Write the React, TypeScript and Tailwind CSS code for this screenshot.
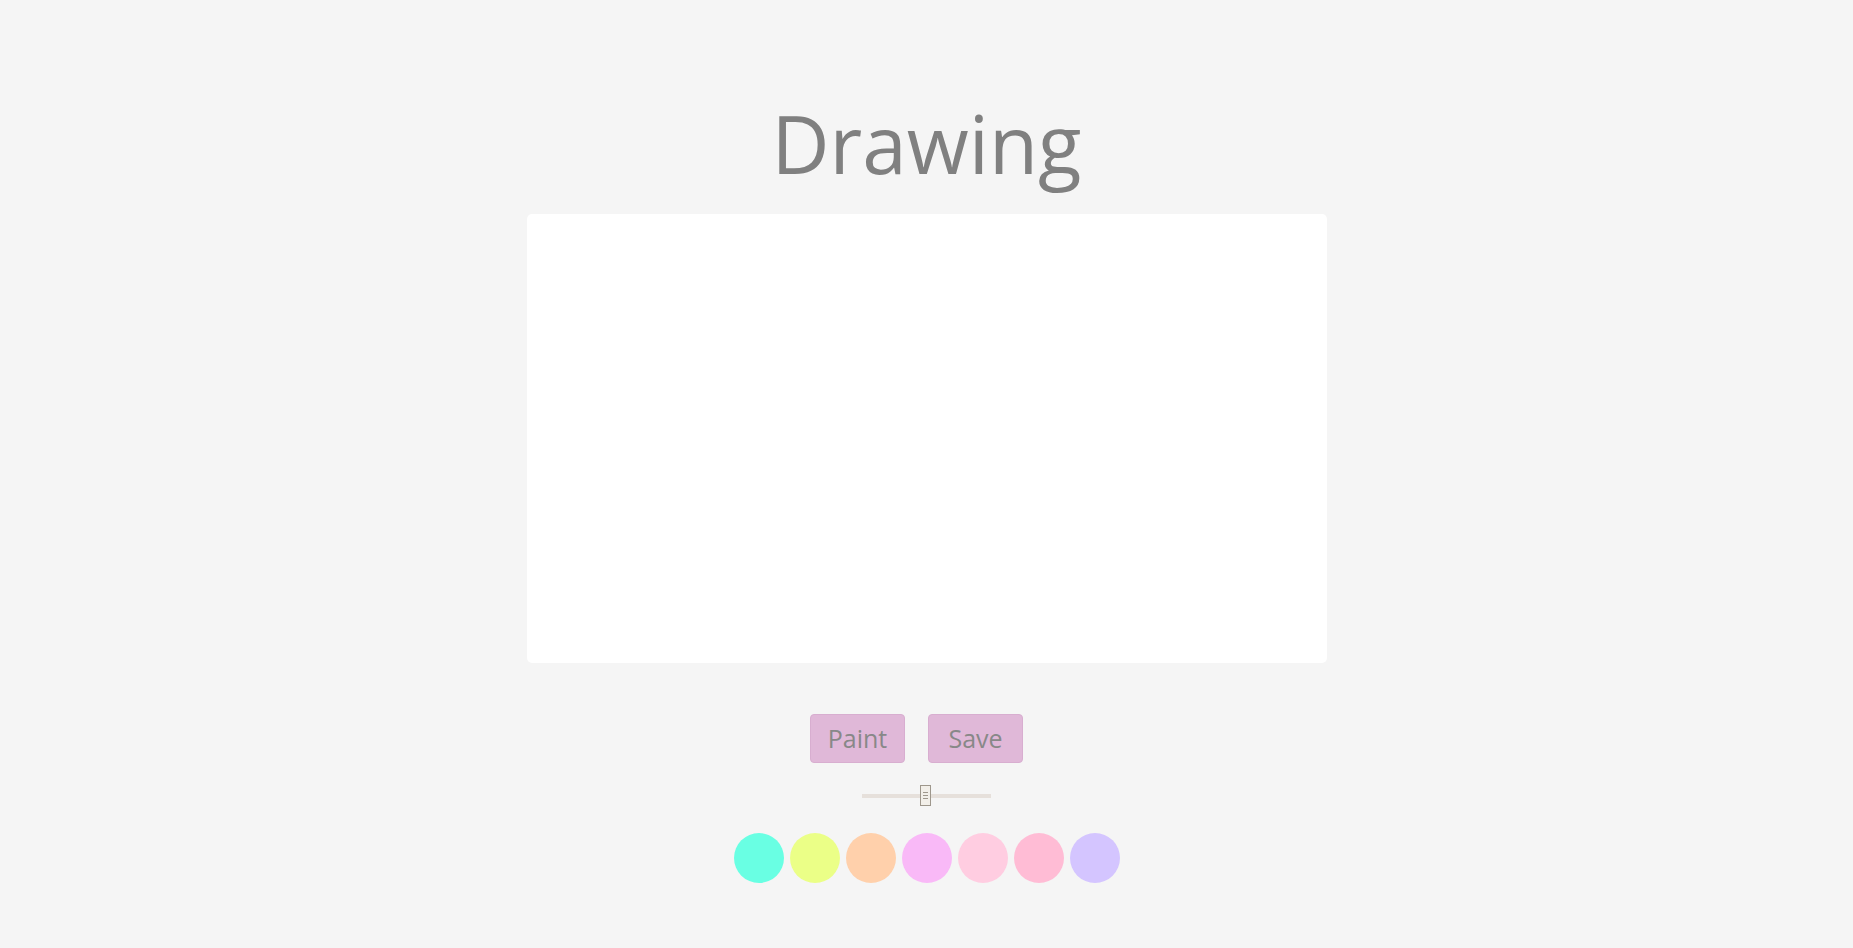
import React from 'react';

const colors = ['#69ffe3', '#ebff87', '#ffd0ab', '#f9b9f7', '#ffcde1', '#ffbcd5', '#d4c5ff'];

const App: React.FC = () => (
  <div className="min-h-screen w-full bg-[#f5f5f5] flex flex-col items-center" style={{ fontFamily: '"Open Sans", "Noto Sans", sans-serif' }}>
    <h1 className="mt-[91px] h-[104px] text-[80px] leading-[104px] text-[#808080] font-normal">Drawing</h1>
    <div className="mt-[19px] w-[800px] h-[449px] bg-white rounded-[5px]"></div>
    <div className="mt-[51px] pr-[20px] flex gap-[23px]">
      <button className="w-[95px] h-[49px] bg-[#e0b8d8] rounded-[4px] text-[25px] text-[#888888] border border-[#d8aed0]">Paint</button>
      <button className="w-[95px] h-[49px] bg-[#e0b8d8] rounded-[4px] text-[25px] text-[#888888] border border-[#d8aed0]">Save</button>
    </div>
    <div className="mt-[22px] relative w-[129px] h-[21px] flex items-center">
      <div className="w-full h-[4px] bg-[#e6e0db]"></div>
      <div className="absolute left-[58px] top-0 w-[11px] h-[21px] bg-[#f2efe9] border border-[#9e978c] flex flex-col items-center justify-center gap-[2px]">
        <div className="w-[5px] h-px bg-[#9e978c]"></div>
        <div className="w-[5px] h-px bg-[#9e978c]"></div>
        <div className="w-[5px] h-px bg-[#9e978c]"></div>
      </div>
    </div>
    <div className="mt-[27px] flex gap-[6px]">
      {colors.map((c) => (
        <div key={c} className="w-[50px] h-[50px] rounded-full" style={{ backgroundColor: c }}></div>
      ))}
    </div>
  </div>
);

export default App;
